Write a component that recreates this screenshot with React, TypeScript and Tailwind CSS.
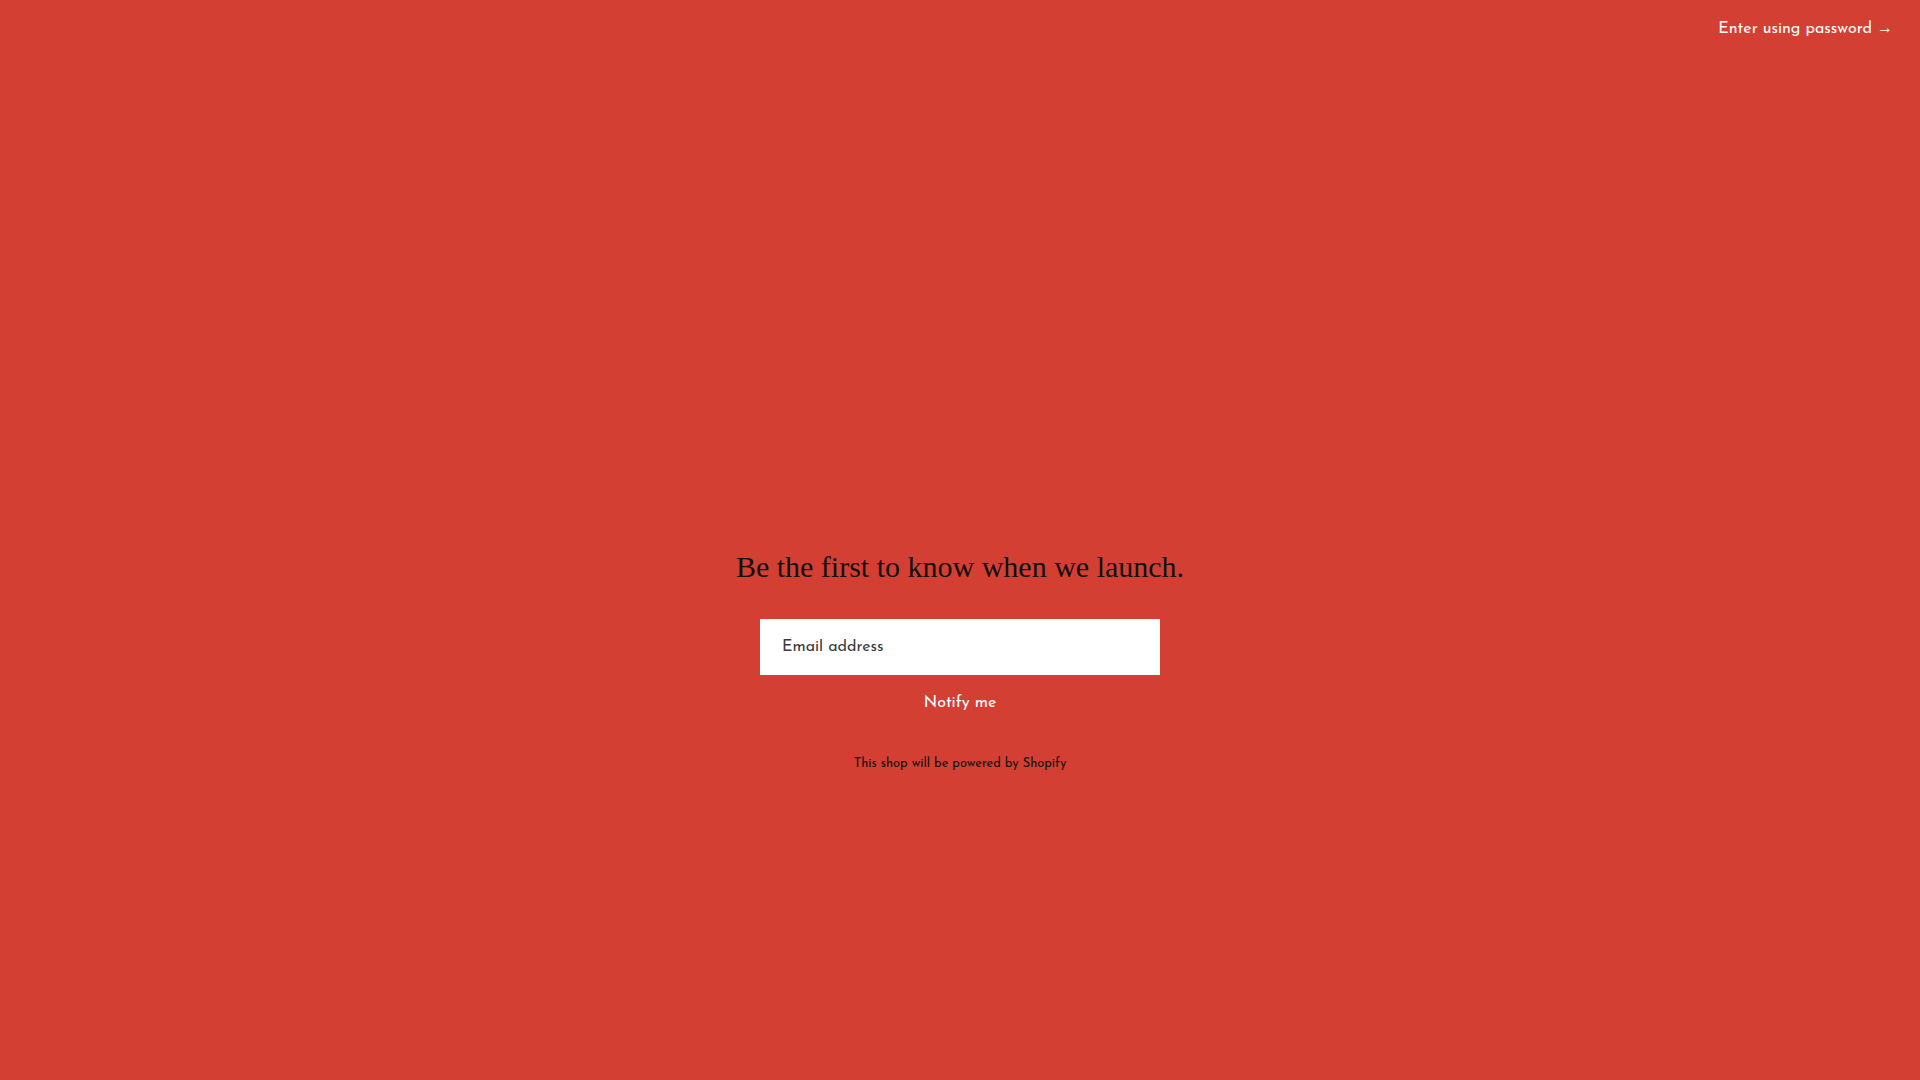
import React from "react";

export default function App() {
  return (
    <div
      className="min-h-screen w-full bg-[#d33f33] flex flex-col"
      style={{ fontFamily: '"Josefin Sans", Lato, "Liberation Sans", sans-serif' }}
    >
      <header className="flex justify-end pt-[16px] pr-[27px]">
        <a href="#" className="text-[16px] leading-6 text-white">
          Enter using password{" "}
          <span style={{ fontFamily: '"Liberation Sans", Arial, sans-serif' }}>→</span>
        </a>
      </header>
      <main className="flex flex-col items-center pt-[508px]">
        <h2
          className="text-[30px] leading-[36px] text-[#111] font-normal"
          style={{ fontFamily: '"Liberation Serif", "Times New Roman", serif' }}
        >
          Be the first to know when we launch.
        </h2>
        <form className="flex flex-col items-center mt-[34px]" onSubmit={(e) => e.preventDefault()}>
          <input
            type="email"
            placeholder="Email address"
            className="w-[400px] h-[56px] bg-white px-[22px] text-[16px] text-[#333] placeholder:text-[#3a3a3a] outline-none border-0"
          />
          <button type="submit" className="mt-[16px] text-[16px] leading-6 text-white">
            Notify me
          </button>
        </form>
        <p className="mt-[39px] text-[12.8px] leading-5 text-[#111]">
          This shop will be powered by Shopify
        </p>
      </main>
    </div>
  );
}
